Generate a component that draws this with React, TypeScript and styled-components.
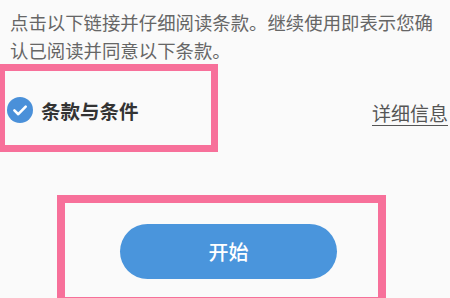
import styled, { createGlobalStyle } from "styled-components";

const GlobalStyle = createGlobalStyle`
  html, body {
    margin: 0;
    padding: 0;
    background: #fafafa;
    overflow: hidden;
  }
  body {
    font-family: "Noto Sans CJK SC", "Noto Sans", sans-serif;
  }
`;

const Page = styled.div`
  width: 450px;
  height: 298px;
  overflow: hidden;
  background: #fafafa;
`;

const Intro = styled.p`
  margin: 8px 0 0 10px;
  width: 428px;
  font-size: 18.4px;
  line-height: 28px;
  color: #666;
`;

const TermsRow = styled.div`
  display: flex;
  align-items: center;
  justify-content: space-between;
  padding-right: 2px;
`;

const Highlight = styled.div<{ $thick: number }>`
  box-sizing: border-box;
  border: ${(p) => p.$thick}px solid #f7709a;
`;

const TermsBox = styled(Highlight)`
  display: flex;
  align-items: center;
  gap: 8px;
  margin-left: -2px;
  width: 220px;
  height: 88px;
  padding: 4px 0 0 2px;
`;

const Check = styled.svg`
  flex: none;
  width: 26px;
  height: 26px;
`;

const TermsLabel = styled.span`
  font-size: 19.5px;
  font-weight: 700;
  color: #333;
`;

const DetailLink = styled.a`
  margin-top: 8px;
  font-size: 19px;
  color: #555;
  text-decoration: underline;
  text-underline-offset: 4px;
  text-decoration-thickness: 1px;
`;

const ButtonBox = styled(Highlight)`
  margin: 43px 0 0 57px;
  width: 329px;
  height: 110px;
  padding: 21px 0 0 55px;
`;

const StartButton = styled.button`
  width: 217px;
  height: 55px;
  border: none;
  border-radius: 28px;
  background: #4a95dc;
  color: #fff;
  font-family: inherit;
  font-size: 20px;
  font-weight: 500;
  padding: 0 0 0 0;
  cursor: pointer;
`;

export default function App() {
  return (
    <Page>
      <GlobalStyle />
      <Intro>点击以下链接并仔细阅读条款。继续使用即表示您确认已阅读并同意以下条款。</Intro>
      <TermsRow>
        <TermsBox $thick={7}>
          <Check viewBox="0 0 26 26">
            <circle cx="13" cy="13" r="13" fill="#4a90d9" />
            <path
              d="M7.4 13.4l3.9 3.8 7.4-7.6"
              fill="none"
              stroke="#fff"
              strokeWidth="2.6"
              strokeLinecap="round"
              strokeLinejoin="round"
            />
          </Check>
          <TermsLabel>条款与条件</TermsLabel>
        </TermsBox>
        <DetailLink>详细信息</DetailLink>
      </TermsRow>
      <ButtonBox $thick={8}>
        <StartButton>开始</StartButton>
      </ButtonBox>
    </Page>
  );
}
